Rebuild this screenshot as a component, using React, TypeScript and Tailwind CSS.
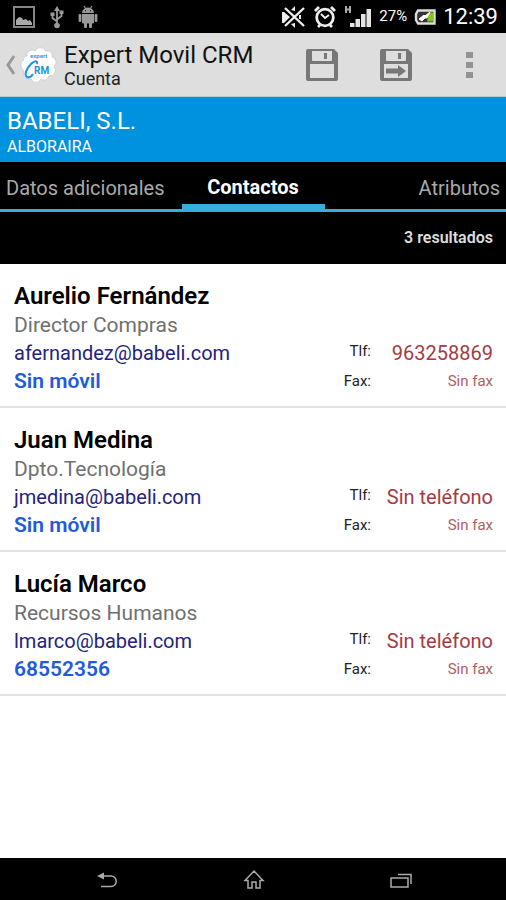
import type { ReactNode } from 'react';

type Contact = {
  name: string;
  role: string;
  email: string;
  mobile: string;
  phone: string;
  fax: string;
};

const contacts: Contact[] = [
  { name: 'Aurelio Fernández', role: 'Director Compras', email: 'afernandez@babeli.com', mobile: 'Sin móvil', phone: '963258869', fax: 'Sin fax' },
  { name: 'Juan Medina', role: 'Dpto.Tecnología', email: 'jmedina@babeli.com', mobile: 'Sin móvil', phone: 'Sin teléfono', fax: 'Sin fax' },
  { name: 'Lucía Marco', role: 'Recursos Humanos', email: 'lmarco@babeli.com', mobile: '68552356', phone: 'Sin teléfono', fax: 'Sin fax' },
];

function StatusBar() {
  return (
    <div className="flex h-[33px] items-center justify-between bg-black pl-3 pr-2 text-white">
      <div className="flex items-center gap-[14px]">
        <svg width="24" height="24" viewBox="0 0 24 24" fill="none" aria-hidden="true">
          <rect x="2" y="2" width="20" height="20" stroke="#858585" strokeWidth="2" />
          <path d="M4 20v-5l3-3 3 1 1 2 3-1 2 2 2-1 2 3v2z" fill="#aaa" />
        </svg>
        <svg width="14" height="24" viewBox="0 0 14 24" fill="none" stroke="#999" strokeWidth="1.800" aria-hidden="true">
          <path d="M7 4v16M2.500 9v4L7 16.500M11.500 7v4L7 14.500" />
          <path d="M7 1l3 5H4zM0.500 7.500h4v3.500h-4zM9.500 5.500h4V9h-4z" fill="#999" stroke="none" />
          <circle cx="7" cy="20.500" r="2.800" fill="#999" stroke="none" />
        </svg>
        <svg width="20" height="24" viewBox="0 0 20 24" fill="#999" aria-hidden="true">
          <path d="M4 8a6 5.500 0 0 1 12 0zM4 9h12v8.500a1 1 0 0 1-1 1H5a1 1 0 0 1-1-1z" />
          <path d="M6 1l2 3M14 1l-2 3" stroke="#999" strokeWidth="1.200" />
          <rect x="0.600" y="9" width="2.800" height="8" rx="1.200" />
          <rect x="16.600" y="9" width="2.800" height="8" rx="1.200" />
          <rect x="6" y="17" width="3" height="6" rx="1" />
          <rect x="11" y="17" width="3" height="6" rx="1" />
          <circle cx="7.500" cy="5.800" r="0.700" fill="#222" />
          <circle cx="12.500" cy="5.800" r="0.700" fill="#222" />
        </svg>
      </div>
      <div className="flex items-center gap-[7px]">
        <svg width="24" height="24" viewBox="0 0 24 24" fill="none" stroke="#eee" strokeWidth="2.400" aria-hidden="true">
          <path d="M0 7h2l6 5-6 6H0z" fill="#eee" stroke="none" />
          <path d="M3 3l19 18M22 3L3 21" />
          <path d="M9 5l4-4v5zM9 19l4 4v-5z" fill="#eee" stroke="none" />
          <path d="M18 10v4" strokeWidth="2" />
        </svg>
        <svg width="24" height="24" viewBox="0 0 24 24" fill="none" stroke="#eee" strokeWidth="2.800" aria-hidden="true">
          <circle cx="12" cy="12.500" r="8.300" />
          <path d="M8 9l4 4 4-3" strokeWidth="2" />
          <path d="M2 6l4-4M22 6l-4-4M5 22l2-2M19 22l-2-2" />
        </svg>
        <svg width="28" height="24" viewBox="0 0 28 24" fill="#e4e4e4" aria-hidden="true">
          <path d="M1 1h2v2.500h2V1h2v7H5V5.500H3V8H1z" fill="#aaa" />
          <rect x="6" y="18" width="4.500" height="4" />
          <rect x="11.500" y="14" width="4.500" height="8" />
          <rect x="17" y="9" width="4.500" height="13" />
          <rect x="22.500" y="4" width="4.500" height="18" />
        </svg>
        <span className="text-[15px]">27%</span>
        <svg width="22" height="16" viewBox="0 0 22 16" fill="none" aria-hidden="true">
          <path d="M4 1.500h16.500v13H4L2 11V5z" stroke="#ddd" strokeWidth="2.400" fill="#333" />
          <path d="M15 3.500h4v9h-6z" fill="#86c51b" />
          <path d="M5 10l5-4 1 1 5-4-3 6-2 0-3 3z" fill="#fff" stroke="#fff" />
        </svg>
        <span className="text-[22px]">12:39</span>
      </div>
    </div>
  );
}

function CloudLogo() {
  return (
    <svg width="38" height="40" viewBox="0 0 38 40" aria-hidden="true">
      <path
        d="M7 11c-1-5 5-7 8-5 3-5 9-4 10 0 5-1 8 2 7 6 5 2 5 7 2 9 3 5 0 10-5 10-2 5-6 5-8 3-3 5-8 4-10 0-6 1-9-4-7-8-4-3-4-10 0-11-1-2 1-4 3-4z"
        fill="#fff"
        stroke="#c8cbce"
        strokeWidth="0.800"
      />
      <text x="10" y="13" fontFamily="Roboto, sans-serif" fontSize="6" fontWeight="700" fill="#2f9fe0">expert</text>
      <path d="M17 19c1-4-3-3-6 0-5 5-7 11-4 13 2 1 4 0 6-3" fill="none" stroke="#1b93dd" strokeWidth="2" />
      <text x="14" y="29" fontFamily="Roboto, sans-serif" fontSize="10" fontWeight="700" fill="#1b93dd">RM</text>
    </svg>
  );
}

function SaveIcon({ arrow = false }: { arrow?: boolean }) {
  return (
    <svg width="32" height="32" viewBox="0 0 32 32" aria-hidden="true">
      <path
        fillRule="evenodd"
        fill="#777"
        d="M2 0h26l4 4v26a2 2 0 0 1-2 2H2a2 2 0 0 1-2-2V2a2 2 0 0 1 2-2zM6 2v9a1 1 0 0 0 1 1h18a1 1 0 0 0 1-1V2zM4 15v14h24V15z"
      />
      <path d="M18 4h3v6h-3z" fill="#777" />
      {arrow && <path d="M6 19.500h12V16l8 6-8 6v-3.500H6z" fill="#777" />}
    </svg>
  );
}

function ActionBar() {
  return (
    <header className="flex h-16 items-center border-b border-[#aecbdc] bg-[#dedede] pl-1 pr-6">
      <button type="button" aria-label="Atrás" className="flex items-center gap-1">
        <svg width="12" height="20" viewBox="0 0 12 20" fill="none" stroke="#999" strokeWidth="3" aria-hidden="true">
          <path d="M10 1L4 10l6 9" />
        </svg>
        <CloudLogo />
      </button>
      <div className="flex-1 pl-[6px] text-[#111]">
        <h1 className="text-2xl leading-7">Expert Movil CRM</h1>
        <p className="text-lg leading-5 text-[#222]">Cuenta</p>
      </div>
      <div className="flex items-center gap-[42px]">
        <button type="button" aria-label="Guardar"><SaveIcon /></button>
        <button type="button" aria-label="Guardar y salir"><SaveIcon arrow /></button>
        <button type="button" aria-label="Más opciones" className="flex w-7 justify-center pl-1">
          <svg width="8" height="28" viewBox="0 0 8 28" fill="#929292" aria-hidden="true">
            <path d="M0 1h7v6H0zM0 11h7v6H0zM0 21h7v6H0z" />
          </svg>
        </button>
      </div>
    </header>
  );
}

function Tabs() {
  return (
    <nav className="grid h-[50px] grid-cols-[1fr_143px_1fr] border-b-[3px] border-[#35aede] bg-black text-xl text-[#aaa]">
      <button type="button" className="whitespace-nowrap pl-[6px] pt-1 text-left">Datos adicionales</button>
      <button type="button" aria-current="page" className="border-b-[5px] border-[#35aede] pt-2 font-bold text-white">Contactos</button>
      <button type="button" className="pr-[6px] pt-1 text-right">Atributos</button>
    </nav>
  );
}

function ContactRow({ contact }: { contact: Contact }) {
  return (
    <li className="flex justify-between border-b-2 border-[#e2e2e2] pb-[11px] pl-[14px] pr-[13px] pt-[17px]">
      <div className="text-[21px] leading-7">
        <h2 className="text-2xl font-semibold leading-[30px] text-black">{contact.name}</h2>
        <p className="text-[#707070]">{contact.role}</p>
        <a href={`mailto:${contact.email}`} className="block text-xl leading-7 text-[#24247c]">{contact.email}</a>
        <p className="font-semibold text-[#1f5bdc]">{contact.mobile}</p>
      </div>
      <dl className="grid grid-cols-[auto_108px] content-end gap-x-[14px] whitespace-nowrap text-[15px] leading-7">
        <dt className="text-right leading-6 text-[#222]">Tlf:</dt>
        <dd className="text-right text-xl leading-7 text-[#a53b42]">{contact.phone}</dd>
        <dt className="text-right text-[#222]">Fax:</dt>
        <dd className="text-right text-[#b06065]">{contact.fax}</dd>
      </dl>
    </li>
  );
}

function NavButton({ label, children }: { label: string; children: ReactNode }) {
  return (
    <button type="button" aria-label={label} className="flex flex-1 items-center justify-center">
      <svg width="22" height="22" viewBox="0 0 22 22" fill="none" stroke="#aaa" strokeWidth="1.500" aria-hidden="true">
        {children}
      </svg>
    </button>
  );
}

export default function App() {
  return (
    <div className="flex min-h-screen flex-col bg-white font-['Roboto',sans-serif]">
      <StatusBar />
      <ActionBar />
      <section className="h-[65px] bg-[#0091df] px-[7px] pt-2 text-white">
        <h2 className="text-2xl leading-8">BABELI, S.L.</h2>
        <p className="text-base leading-5">ALBORAIRA</p>
      </section>
      <Tabs />
      <p className="bg-black px-[13px] py-3 text-right text-base font-semibold leading-7 text-[#ddd]">3 resultados</p>
      <main className="flex-1">
        <ul>
          {contacts.map((contact) => (
            <ContactRow key={contact.name} contact={contact} />
          ))}
        </ul>
      </main>
      <footer className="flex h-[42px] bg-black pl-[34px] pr-8 pt-[2px]">
        <NavButton label="Volver">
          <path d="M6 7h9a5 5 0 0 1 0 10.500H5" />
          <path d="M1 7l7-3.500v7z" fill="#aaa" stroke="none" />
        </NavButton>
        <NavButton label="Inicio">
          <path d="M11 2l9 9.500h-3V19h-4v-6H9v6H5v-7.500H2z" />
        </NavButton>
        <NavButton label="Recientes">
          <path d="M1 9h17v9H1zM8 5.500h13V15" />
        </NavButton>
      </footer>
    </div>
  );
}
